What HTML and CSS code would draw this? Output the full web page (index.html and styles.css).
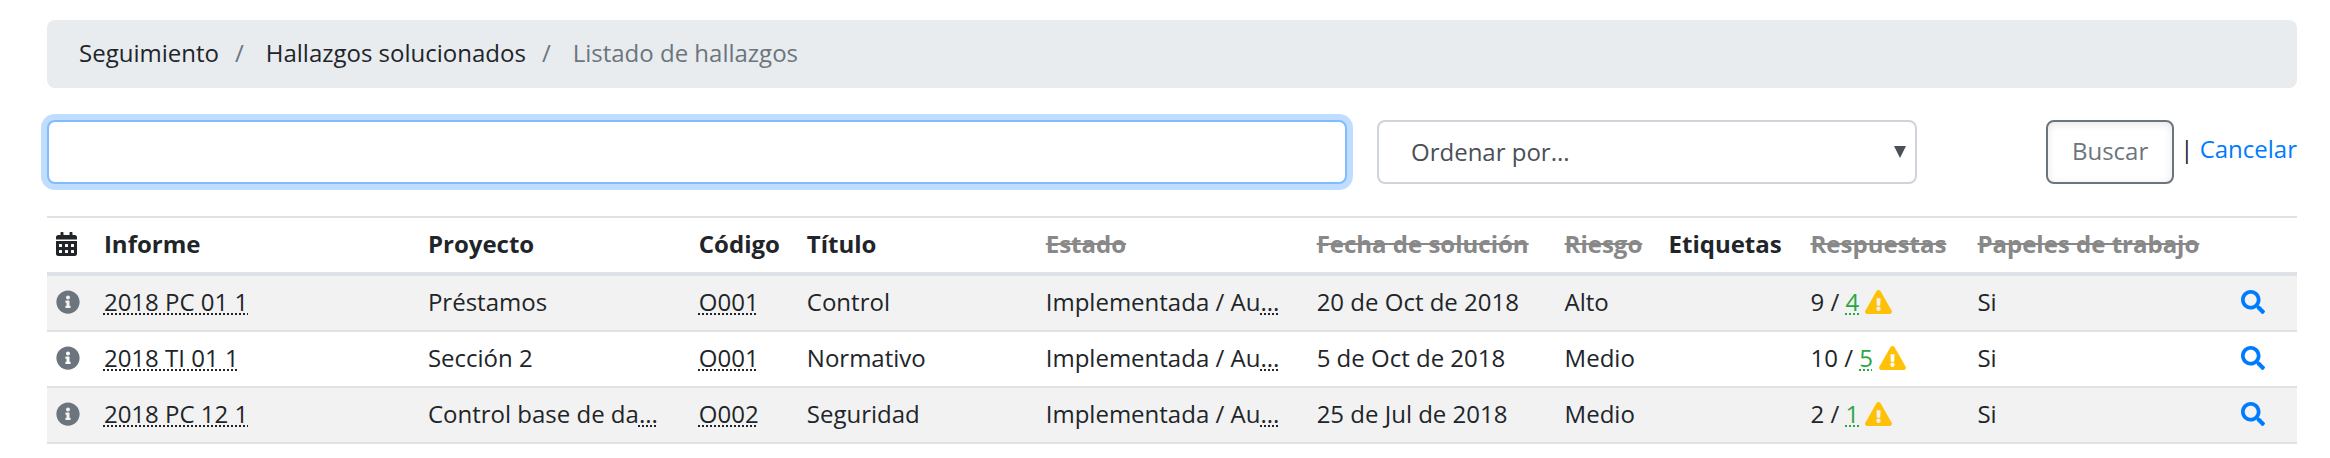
FILE: index.html
```html
<!DOCTYPE html>
<html lang="es">
<head>
<meta charset="utf-8">
<meta name="viewport" content="width=device-width, initial-scale=1">
<title>Listado de hallazgos</title>
<link rel="stylesheet" href="styles.css">
</head>
<body>
<svg class="sprite" aria-hidden="true">
  <symbol id="calendar" viewBox="0 0 448 512"><path d="M0 464c0 26.500 21.500 48 48 48h352c26.500 0 48-21.500 48-48V192H0v272zm320-196c0-6.600 5.400-12 12-12h40c6.600 0 12 5.400 12 12v40c0 6.600-5.400 12-12 12h-40c-6.600 0-12-5.400-12-12v-40zm0 128c0-6.600 5.400-12 12-12h40c6.600 0 12 5.400 12 12v40c0 6.600-5.400 12-12 12h-40c-6.600 0-12-5.400-12-12v-40zM192 268c0-6.600 5.400-12 12-12h40c6.600 0 12 5.400 12 12v40c0 6.600-5.400 12-12 12h-40c-6.600 0-12-5.400-12-12v-40zm0 128c0-6.600 5.400-12 12-12h40c6.600 0 12 5.400 12 12v40c0 6.600-5.400 12-12 12h-40c-6.600 0-12-5.400-12-12v-40zM64 268c0-6.600 5.400-12 12-12h40c6.600 0 12 5.400 12 12v40c0 6.600-5.400 12-12 12H76c-6.600 0-12-5.400-12-12v-40zm0 128c0-6.600 5.400-12 12-12h40c6.600 0 12 5.400 12 12v40c0 6.600-5.400 12-12 12H76c-6.600 0-12-5.400-12-12v-40zM400 64h-48V16c0-8.800-7.200-16-16-16h-32c-8.800 0-16 7.200-16 16v48H160V16c0-8.800-7.200-16-16-16h-32c-8.800 0-16 7.200-16 16v48H48C21.500 64 0 85.500 0 112v48h448v-48c0-26.500-21.500-48-48-48z"/></symbol>
  <symbol id="info" viewBox="0 0 512 512"><path d="M256 8C119.043 8 8 119.083 8 256c0 136.997 111.043 248 248 248s248-111.003 248-248C504 119.083 392.957 8 256 8zm0 110c23.196 0 42 18.804 42 42s-18.804 42-42 42-42-18.804-42-42 18.804-42 42-42zm56 254c0 6.627-5.373 12-12 12h-88c-6.627 0-12-5.373-12-12v-24c0-6.627 5.373-12 12-12h12v-64h-12c-6.627 0-12-5.373-12-12v-24c0-6.627 5.373-12 12-12h64c6.627 0 12 5.373 12 12v100h12c6.627 0 12 5.373 12 12v24z"/></symbol>
  <symbol id="warning" viewBox="0 0 576 512"><path d="M569.517 440.013C587.975 472.007 564.806 512 527.940 512H48.054c-36.937 0-59.999-40.055-41.577-71.987L246.423 23.985c18.467-32.009 64.720-31.951 83.154 0l239.940 416.028zM288 354c-25.405 0-46 20.595-46 46s20.595 46 46 46 46-20.595 46-46-20.595-46-46-46zm-43.673-165.346l7.418 136c.347 6.364 5.609 11.346 11.982 11.346h48.546c6.373 0 11.635-4.982 11.982-11.346l7.418-136c.375-6.874-5.098-12.654-11.982-12.654h-63.383c-6.884 0-12.356 5.780-11.981 12.654z"/></symbol>
  <symbol id="search" viewBox="0 0 512 512"><path d="M505 442.700L405.300 343c-4.500-4.500-10.600-7-17-7H372c27.600-35.300 44-79.700 44-128C416 93.100 322.900 0 208 0S0 93.100 0 208s93.100 208 208 208c48.300 0 92.700-16.400 128-44v16.300c0 6.400 2.500 12.500 7 17l99.700 99.700c9.400 9.400 24.600 9.400 33.900 0l28.300-28.300c9.400-9.400 9.400-24.600.1-34zM208 336c-70.700 0-128-57.200-128-128 0-70.700 57.200-128 128-128 70.700 0 128 57.200 128 128 0 70.700-57.200 128-128 128z"/></symbol>
</svg>

<nav aria-label="Ruta">
  <ol class="breadcrumb">
    <li><a href="#">Seguimiento</a></li>
    <li><a href="#">Hallazgos solucionados</a></li>
    <li class="current" aria-current="page">Listado de hallazgos</li>
  </ol>
</nav>

<form class="search-form">
  <input class="field field-active" type="text" aria-label="Buscar hallazgos">
  <div class="select-wrap">
    <select class="field" aria-label="Ordenar por">
      <option>Ordenar por...</option>
    </select>
  </div>
  <div class="actions">
    <button class="button" type="submit">Buscar</button>
    <div class="cancel"><span>|</span> <a href="#">Cancelar</a></div>
  </div>
</form>

<table class="findings">
  <colgroup>
    <col class="c-icon"><col class="c-report"><col class="c-project"><col class="c-code"><col class="c-title"><col class="c-state"><col class="c-date"><col class="c-risk"><col class="c-tags"><col class="c-answers"><col class="c-papers"><col class="c-view">
  </colgroup>
  <thead>
    <tr>
      <th><svg class="icon icon-calendar" role="img" aria-label="Fecha"><use href="#calendar"/></svg></th>
      <th>Informe</th>
      <th>Proyecto</th>
      <th>Código</th>
      <th>Título</th>
      <th><del>Estado</del></th>
      <th><del>Fecha de solución</del></th>
      <th><del>Riesgo</del></th>
      <th>Etiquetas</th>
      <th><del>Respuestas</del></th>
      <th><del>Papeles de trabajo</del></th>
      <th></th>
    </tr>
  </thead>
  <tbody>
    <tr>
      <td><svg class="icon icon-info" role="img" aria-label="Información"><use href="#info"/></svg></td>
      <td><abbr>2018 PC 01 1</abbr></td>
      <td>Préstamos</td>
      <td><abbr>O001</abbr></td>
      <td>Control</td>
      <td>Implementada / Au<abbr>...</abbr></td>
      <td>20 de Oct de 2018</td>
      <td>Alto</td>
      <td></td>
      <td>9 / <abbr class="ok">4</abbr> <svg class="icon icon-warning" role="img" aria-label="Atención"><use href="#warning"/></svg></td>
      <td>Si</td>
      <td><a href="#" aria-label="Ver"><svg class="icon"><use href="#search"/></svg></a></td>
    </tr>
    <tr>
      <td><svg class="icon icon-info" role="img" aria-label="Información"><use href="#info"/></svg></td>
      <td><abbr>2018 TI 01 1</abbr></td>
      <td>Sección 2</td>
      <td><abbr>O001</abbr></td>
      <td>Normativo</td>
      <td>Implementada / Au<abbr>...</abbr></td>
      <td>5 de Oct de 2018</td>
      <td>Medio</td>
      <td></td>
      <td>10 / <abbr class="ok">5</abbr> <svg class="icon icon-warning" role="img" aria-label="Atención"><use href="#warning"/></svg></td>
      <td>Si</td>
      <td><a href="#" aria-label="Ver"><svg class="icon"><use href="#search"/></svg></a></td>
    </tr>
    <tr>
      <td><svg class="icon icon-info" role="img" aria-label="Información"><use href="#info"/></svg></td>
      <td><abbr>2018 PC 12 1</abbr></td>
      <td>Control base de da<abbr>...</abbr></td>
      <td><abbr>O002</abbr></td>
      <td>Seguridad</td>
      <td>Implementada / Au<abbr>...</abbr></td>
      <td>25 de Jul de 2018</td>
      <td>Medio</td>
      <td></td>
      <td>2 / <abbr class="ok">1</abbr> <svg class="icon icon-warning" role="img" aria-label="Atención"><use href="#warning"/></svg></td>
      <td>Si</td>
      <td><a href="#" aria-label="Ver"><svg class="icon"><use href="#search"/></svg></a></td>
    </tr>
  </tbody>
</table>
</body>
</html>
```

FILE: styles.css
```css
*, *::before, *::after { box-sizing: border-box; }

body {
  margin: 0;
  padding: 20px 33px 12px 47px;
  background: #fff;
  color: #212529;
  font-family: "Open Sans", "Noto Sans", sans-serif;
  font-size: 24px;
  line-height: 35px;
}

a { color: #007bff; text-decoration: none; }

.sprite { display: none; }

.icon {
  width: 24px;
  height: 24px;
  fill: currentColor;
  vertical-align: -3px;
}
.icon-calendar { width: 21px; }
.icon-info { color: #6c757d; }
.icon-warning { width: 27px; color: #ffc107; }

.breadcrumb {
  display: flex;
  flex-wrap: wrap;
  margin: 0 0 32px;
  padding: 15px 32px 18px;
  list-style: none;
  background: #e9ecef;
  border-radius: 8px;
}
.breadcrumb a { color: #212529; }
.breadcrumb li + li::before {
  content: "/";
  padding: 0 22px 0 16px;
  color: #6c757d;
}
.breadcrumb .current { color: #6c757d; }

.search-form {
  display: grid;
  grid-template-columns: 1300fr 540fr 350fr;
  gap: 30px;
  margin-bottom: 32px;
}
.field {
  display: block;
  width: 100%;
  height: 64px;
  padding: 0 32px 1px;
  border: 2px solid #ced4da;
  border-radius: 8px;
  background: #fff;
  color: #495057;
  font: inherit;
  appearance: none;
  outline: 0;
}
.field-active {
  border-color: #80bdff;
  box-shadow: 0 0 0 6px rgba(0, 123, 255, .25);
}
.select-wrap { position: relative; }
.select-wrap::after {
  content: "";
  position: absolute;
  top: 26px;
  right: 11px;
  width: 12px;
  height: 12px;
  background: #495057;
  clip-path: polygon(0 0, 100% 0, 50% 100%);
  pointer-events: none;
}
.actions {
  display: flex;
  justify-content: flex-end;
  gap: 6px;
}
.button {
  height: 64px;
  padding: 0 24px 3px;
  border: 2px solid #6c757d;
  border-radius: 8px;
  background: #fff;
  box-shadow: inset 0 2px 8px rgba(0, 0, 0, .1);
  color: #6c757d;
  font: inherit;
}
.cancel { padding-top: 11px; }

.findings {
  width: 100%;
  table-layout: fixed;
  border-collapse: separate;
  border-spacing: 0;
  border-top: 2px solid #dee2e6;
}
.findings th, .findings td {
  padding: 8px 9px 11px;
  text-align: left;
  vertical-align: top;
  white-space: nowrap;
}
.findings th {
  border-bottom: 4px solid #dee2e6;
  font-weight: 700;
}
.findings td { border-bottom: 2px solid #dee2e6; }
.findings tbody tr:nth-child(odd) { background: #f2f2f2; }
.findings del { color: #888; }
.findings abbr {
  text-decoration: underline dotted 2px;
  text-decoration-skip-ink: none;
  text-underline-offset: 2px;
}
.findings .ok { color: #28a745; }

.c-icon { width: 2.13%; }
.c-report { width: 14.4%; }
.c-project { width: 12.04%; }
.c-code { width: 4.8%; }
.c-title { width: 10.62%; }
.c-state { width: 12.04%; }
.c-date { width: 11.02%; }
.c-risk { width: 4.62%; }
.c-tags { width: 6.31%; }
.c-answers { width: 7.42%; }
.c-papers { width: 11.71%; }
.c-view { width: 2.89%; }
```
